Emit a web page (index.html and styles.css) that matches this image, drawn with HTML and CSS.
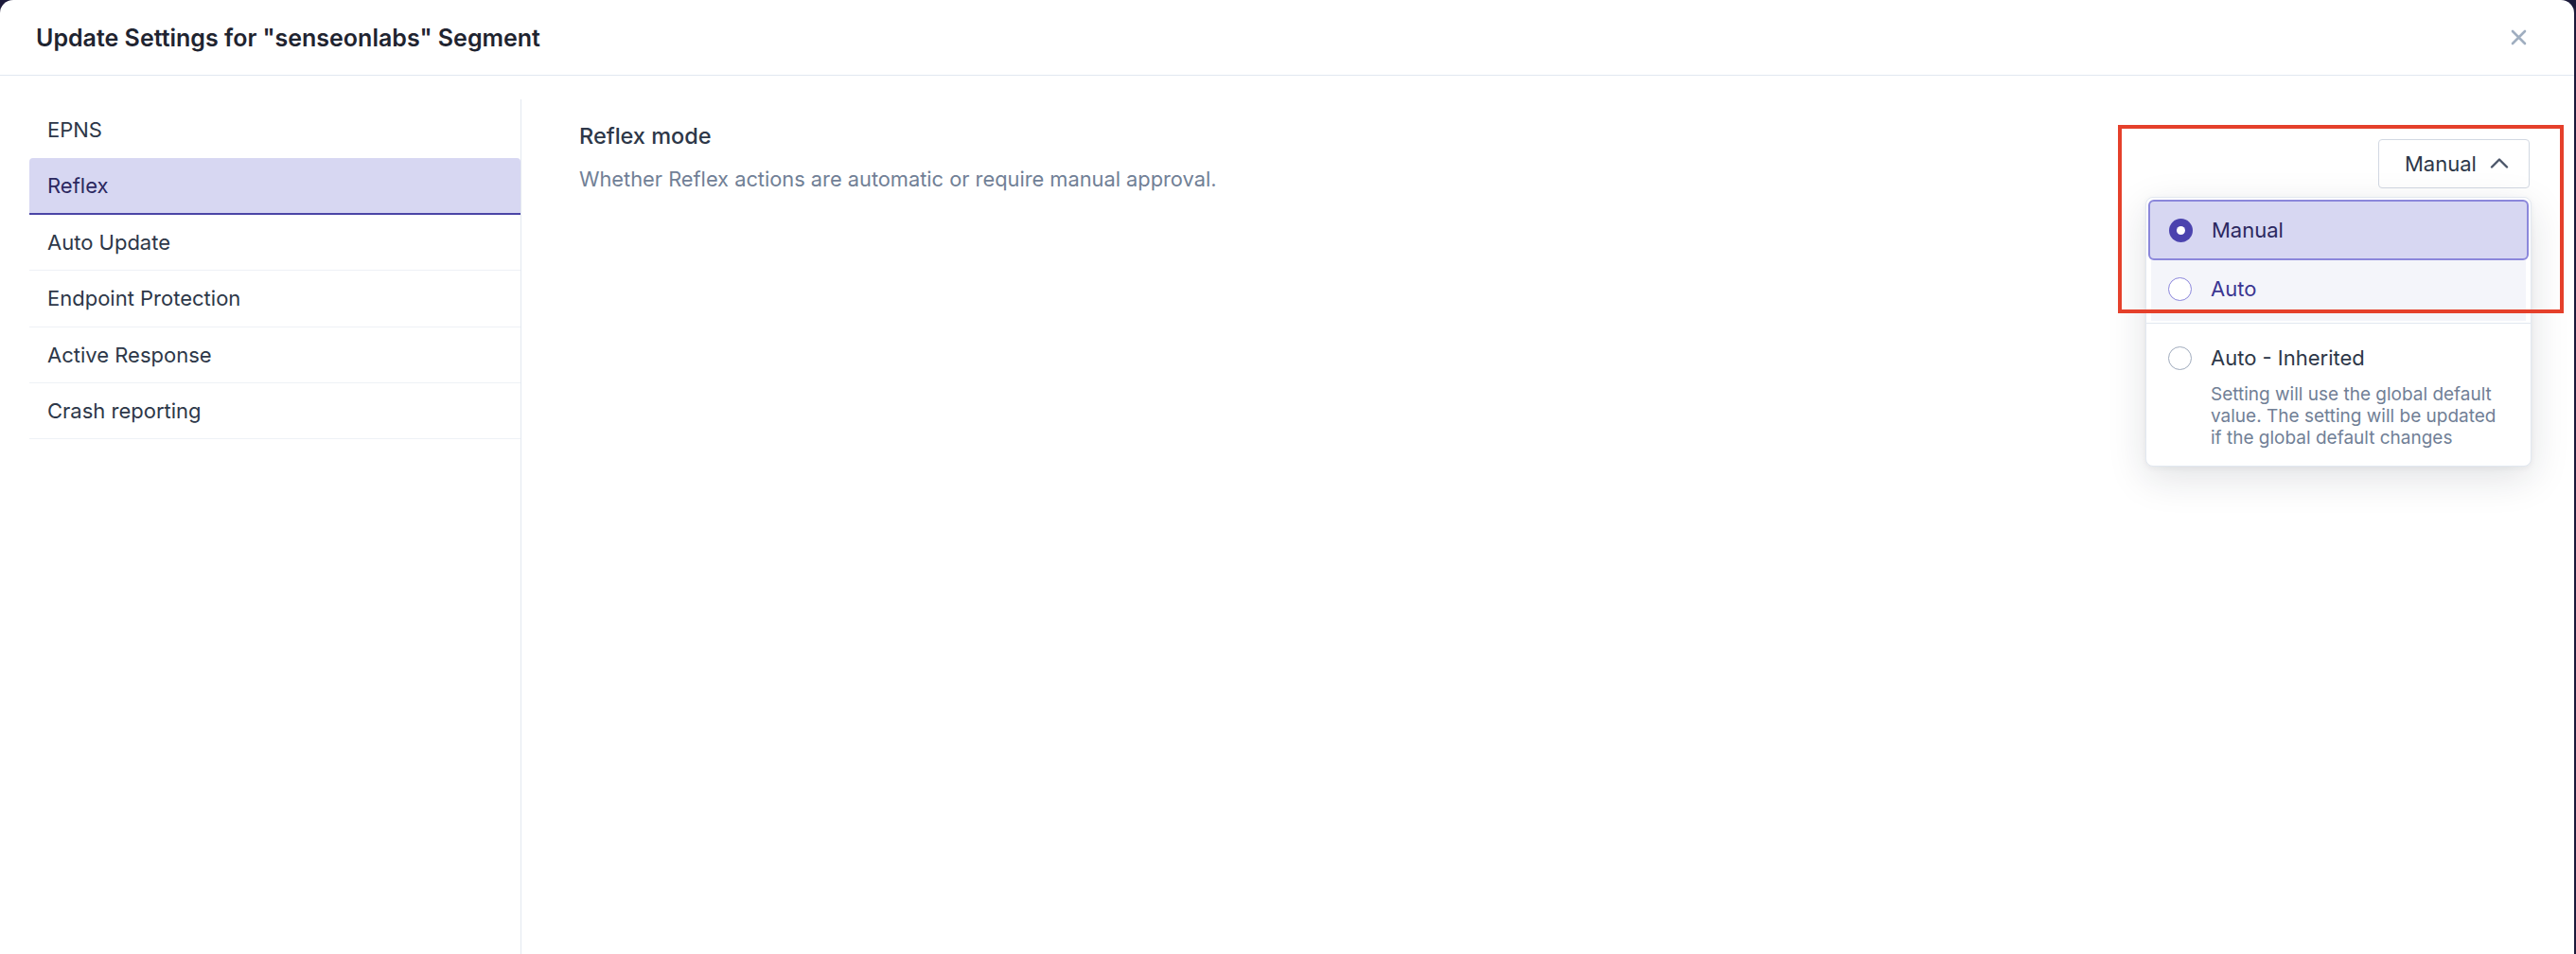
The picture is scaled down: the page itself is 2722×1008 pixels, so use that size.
FILE: index.html
```html
<!DOCTYPE html>
<html lang="en">
<head>
    <meta charset="UTF-8">
    <meta name="viewport" content="width=device-width, initial-scale=1.0">
    <title>Update Settings</title>
    <link rel="stylesheet" href="styles.css">
</head>
<body>

    <div class="modal">
        <div class="modal-header">
            <h1 class="modal-title">Update Settings for "senseonlabs" Segment</h1>
            <button class="close-button" aria-label="Close">
                <svg width="17" height="17" viewBox="0 0 17 17"><path d="M2 2 L15 15 M15 2 L2 15" stroke="#a0aec0" stroke-width="2.6" stroke-linecap="round" fill="none"/></svg>
            </button>
        </div>

        <div class="modal-body">
            <nav class="sidebar">
                <div class="nav-item">EPNS</div>
                <div class="nav-item active">Reflex</div>
                <div class="nav-item">Auto Update</div>
                <div class="nav-item">Endpoint Protection</div>
                <div class="nav-item">Active Response</div>
                <div class="nav-item">Crash reporting</div>
            </nav>

            <section class="content">
                <div class="setting-row">
                    <div class="setting-text">
                        <div class="setting-title">Reflex mode</div>
                        <div class="setting-desc">Whether Reflex actions are automatic or require manual approval.</div>
                    </div>

                    <div class="select">
                        <button class="select-button">
                            <span>Manual</span>
                            <svg width="20" height="12" viewBox="0 0 20 12"><polyline points="2,10.5 10,2.5 18,10.5" stroke="#4a5568" stroke-width="2.4" stroke-linecap="round" stroke-linejoin="round" fill="none"/></svg>
                        </button>

                        <div class="select-menu">
                            <div class="option selected">
                                <span class="radio checked"></span>
                                <span class="option-label">Manual</span>
                            </div>
                            <div class="option hover">
                                <span class="radio"></span>
                                <span class="option-label">Auto</span>
                            </div>
                            <div class="menu-divider"></div>
                            <div class="option inherited">
                                <span class="radio muted"></span>
                                <div class="option-body">
                                    <div class="option-label">Auto - Inherited</div>
                                    <div class="option-help">Setting will use the global default value. The setting will be updated if the global default changes</div>
                                </div>
                            </div>
                        </div>
                    </div>
                </div>
            </section>
        </div>

        <div class="highlight-box"></div>
    </div>

</body>
</html>
```
FILE: styles.css
```css
* { box-sizing: border-box; }
body { margin: 0; background: #1c1a3a; height: 1008px; overflow: hidden; font-family: Inter, "Noto Sans", sans-serif; }
.modal { position: relative; width: 2720px; height: 1008px; background: white; border-radius: 14px 14px 0 0; display: flex; flex-direction: column; }

.modal-header { height: 80px; flex-shrink: 0; display: flex; align-items: center; justify-content: space-between; padding: 0 50px 0 38px; border-bottom: 1px solid #e2e8f0; }
.modal-title { margin: 0; font-size: 25px; font-weight: 600; color: #1f2430; }
.close-button { border: none; background: none; padding: 0; display: flex; cursor: pointer; }

.modal-body { flex: 1; display: flex; padding-top: 25px; }
.sidebar { width: 551px; padding: 3px 0 0 31px; border-right: 1px solid #e2e8f0; }
.nav-item { height: 59.4px; display: flex; align-items: center; padding-left: 19px; font-size: 22px; color: #2d3748; border-bottom: 1px solid #eef1f6; }
.nav-item:first-child { border-bottom-color: transparent; }
.nav-item.active { background: #d7d7f2; color: #2b2860; border-bottom: 2px solid #4b45a6; border-radius: 4px 4px 0 0; }

.content { flex: 1; padding: 24px 47px 0 61px; }
.setting-row { display: flex; justify-content: space-between; align-items: flex-start; }
.setting-title { font-size: 23.5px; line-height: 30px; font-weight: 500; color: #2d3748; }
.setting-desc { font-size: 21.8px; line-height: 30px; color: #718096; margin-top: 15px; }

.select { position: relative; margin-top: 18px; }
.select-button { width: 160px; height: 52px; display: flex; align-items: center; justify-content: space-between; padding: 0 21px 0 27px; background: white; border: 1px solid #d2d8e2; border-radius: 4px; font-family: inherit; font-size: 22px; color: #2d3748; }
.select-button svg { margin-top: -2px; }

.select-menu { position: absolute; top: 61px; right: -2px; width: 408px; background: white; border: 1px solid #e2e8f0; border-radius: 8px; padding: 2px; box-shadow: 0 12px 40px rgba(26, 32, 44, 0.13), 0 2px 6px rgba(26, 32, 44, 0.05); z-index: 2; }
.option { display: flex; align-items: center; gap: 20px; height: 64px; padding-left: 21px; font-size: 22px; }
.option.selected { border: 2px solid #8b87db; background: #d7d7f2; border-radius: 6px; color: #2b2860; padding-left: 20px; }
.option.hover { margin: 0 3px; background: #f4f5fa; color: #3b3692; padding-left: 18px; padding-bottom: 4px; }
.menu-divider { height: 1px; background: #e2e8f0; margin: 2px -2px 0; }
.option.inherited { height: auto; align-items: flex-start; padding: 22px 20px 16px 21px; color: #2d3748; }
.option.inherited .option-label { line-height: 28px; }
.option-help { margin-top: 13px; max-width: 312px; font-size: 19px; line-height: 23px; color: #718096; }

.radio { width: 25px; height: 25px; flex-shrink: 0; border-radius: 50%; border: 1.5px solid #8b86dc; background: white; position: relative; }
.radio.checked { border: none; background: #4b43ae; }
.radio.checked::after { content: ""; position: absolute; left: 8px; top: 8px; width: 9px; height: 9px; border-radius: 50%; background: white; }
.radio.muted { border-color: #a0abbd; margin-top: 2px; }

.highlight-box { position: absolute; left: 2238px; top: 132px; width: 471px; height: 199px; border: 4px solid #e5402b; z-index: 3; pointer-events: none; }
```
